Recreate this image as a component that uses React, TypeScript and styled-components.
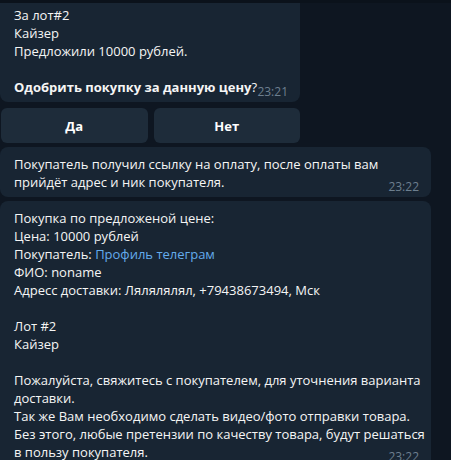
import React from "react";
import styled, { createGlobalStyle } from "styled-components";

const GlobalStyle = createGlobalStyle`
  html, body {
    margin: 0;
    padding: 0;
    background: #0e1621;
  }
  body {
    font-family: "Open Sans", "Noto Sans", sans-serif;
    -webkit-font-smoothing: antialiased;
  }
`;

const Chat = styled.div`
  width: 451px;
  height: 460px;
  overflow: hidden;
  background: #0e1621;
  border-top: 3px solid #0b121b;
  box-sizing: border-box;
  display: flex;
  flex-direction: column;
  gap: 4px;
`;

const Group = styled.div<{ $width: number }>`
  width: ${(p) => p.$width}px;
  display: flex;
  flex-direction: column;
  gap: 6px;
`;

const Bubble = styled.div<{ $width: number; $top?: number; $cut?: boolean }>`
  position: relative;
  width: ${(p) => p.$width}px;
  box-sizing: border-box;
  background: #182533;
  border-radius: ${(p) => (p.$cut ? "0 0 8px 8px" : "8px")};
  padding: ${(p) => p.$top ?? 8}px 10px 6px 14px;
  color: #f5f5f5;
  font-size: 13px;
  line-height: 18px;
`;

const Line = styled.div`
  min-height: 18px;
  white-space: nowrap;
`;

const Bold = styled.span`
  font-weight: 700;
`;

const Link = styled.span`
  color: #64abeb;
`;

const Time = styled.span`
  position: absolute;
  right: 12px;
  bottom: 2px;
  font-size: 12px;
  line-height: 16px;
  color: #6d7f8f;
`;

const Buttons = styled.div`
  display: flex;
  gap: 6px;
  padding-left: 1px;
`;

const KeyButton = styled.button`
  flex: 1;
  height: 35px;
  border: none;
  border-radius: 6px;
  background: #1e2c3a;
  color: #ffffff;
  font-family: "Open Sans", "Noto Sans", sans-serif;
  font-size: 13px;
  font-weight: 700;
  cursor: pointer;
`;

export default function App() {
  return (
    <>
      <GlobalStyle />
      <Chat>
        <Group $width={300}>
          <Bubble $width={300} $top={3} $cut>
            <Line>За лот#2</Line>
            <Line>Кайзер</Line>
            <Line>Предложили 10000 рублей.</Line>
            <Line />
            <Line>
              <Bold>Одобрить покупку за данную цену</Bold>?
            </Line>
            <Time>23:21</Time>
          </Bubble>
          <Buttons>
            <KeyButton>Да</KeyButton>
            <KeyButton>Нет</KeyButton>
          </Buttons>
        </Group>
        <Bubble $width={431}>
          <Line>Покупатель получил ссылку на оплату, после оплаты вам</Line>
          <Line>прийдёт адрес и ник покупателя.</Line>
          <Time>23:22</Time>
        </Bubble>
        <Bubble $width={431}>
          <Line>Покупка по предложеной цене:</Line>
          <Line>Цена: 10000 рублей</Line>
          <Line>
            Покупатель: <Link>Профиль телеграм</Link>
          </Line>
          <Line>ФИО: noname</Line>
          <Line>Адресс доставки: Лялялялял, +79438673494, Мск</Line>
          <Line />
          <Line>Лот #2</Line>
          <Line>Кайзер</Line>
          <Line />
          <Line>Пожалуйста, свяжитесь с покупателем, для уточнения варианта</Line>
          <Line>доставки.</Line>
          <Line>Так же Вам необходимо сделать видео/фото отправки товара.</Line>
          <Line>Без этого, любые претензии по качеству товара, будут решаться</Line>
          <Line>в пользу покупателя.</Line>
          <Time>23:22</Time>
        </Bubble>
      </Chat>
    </>
  );
}
